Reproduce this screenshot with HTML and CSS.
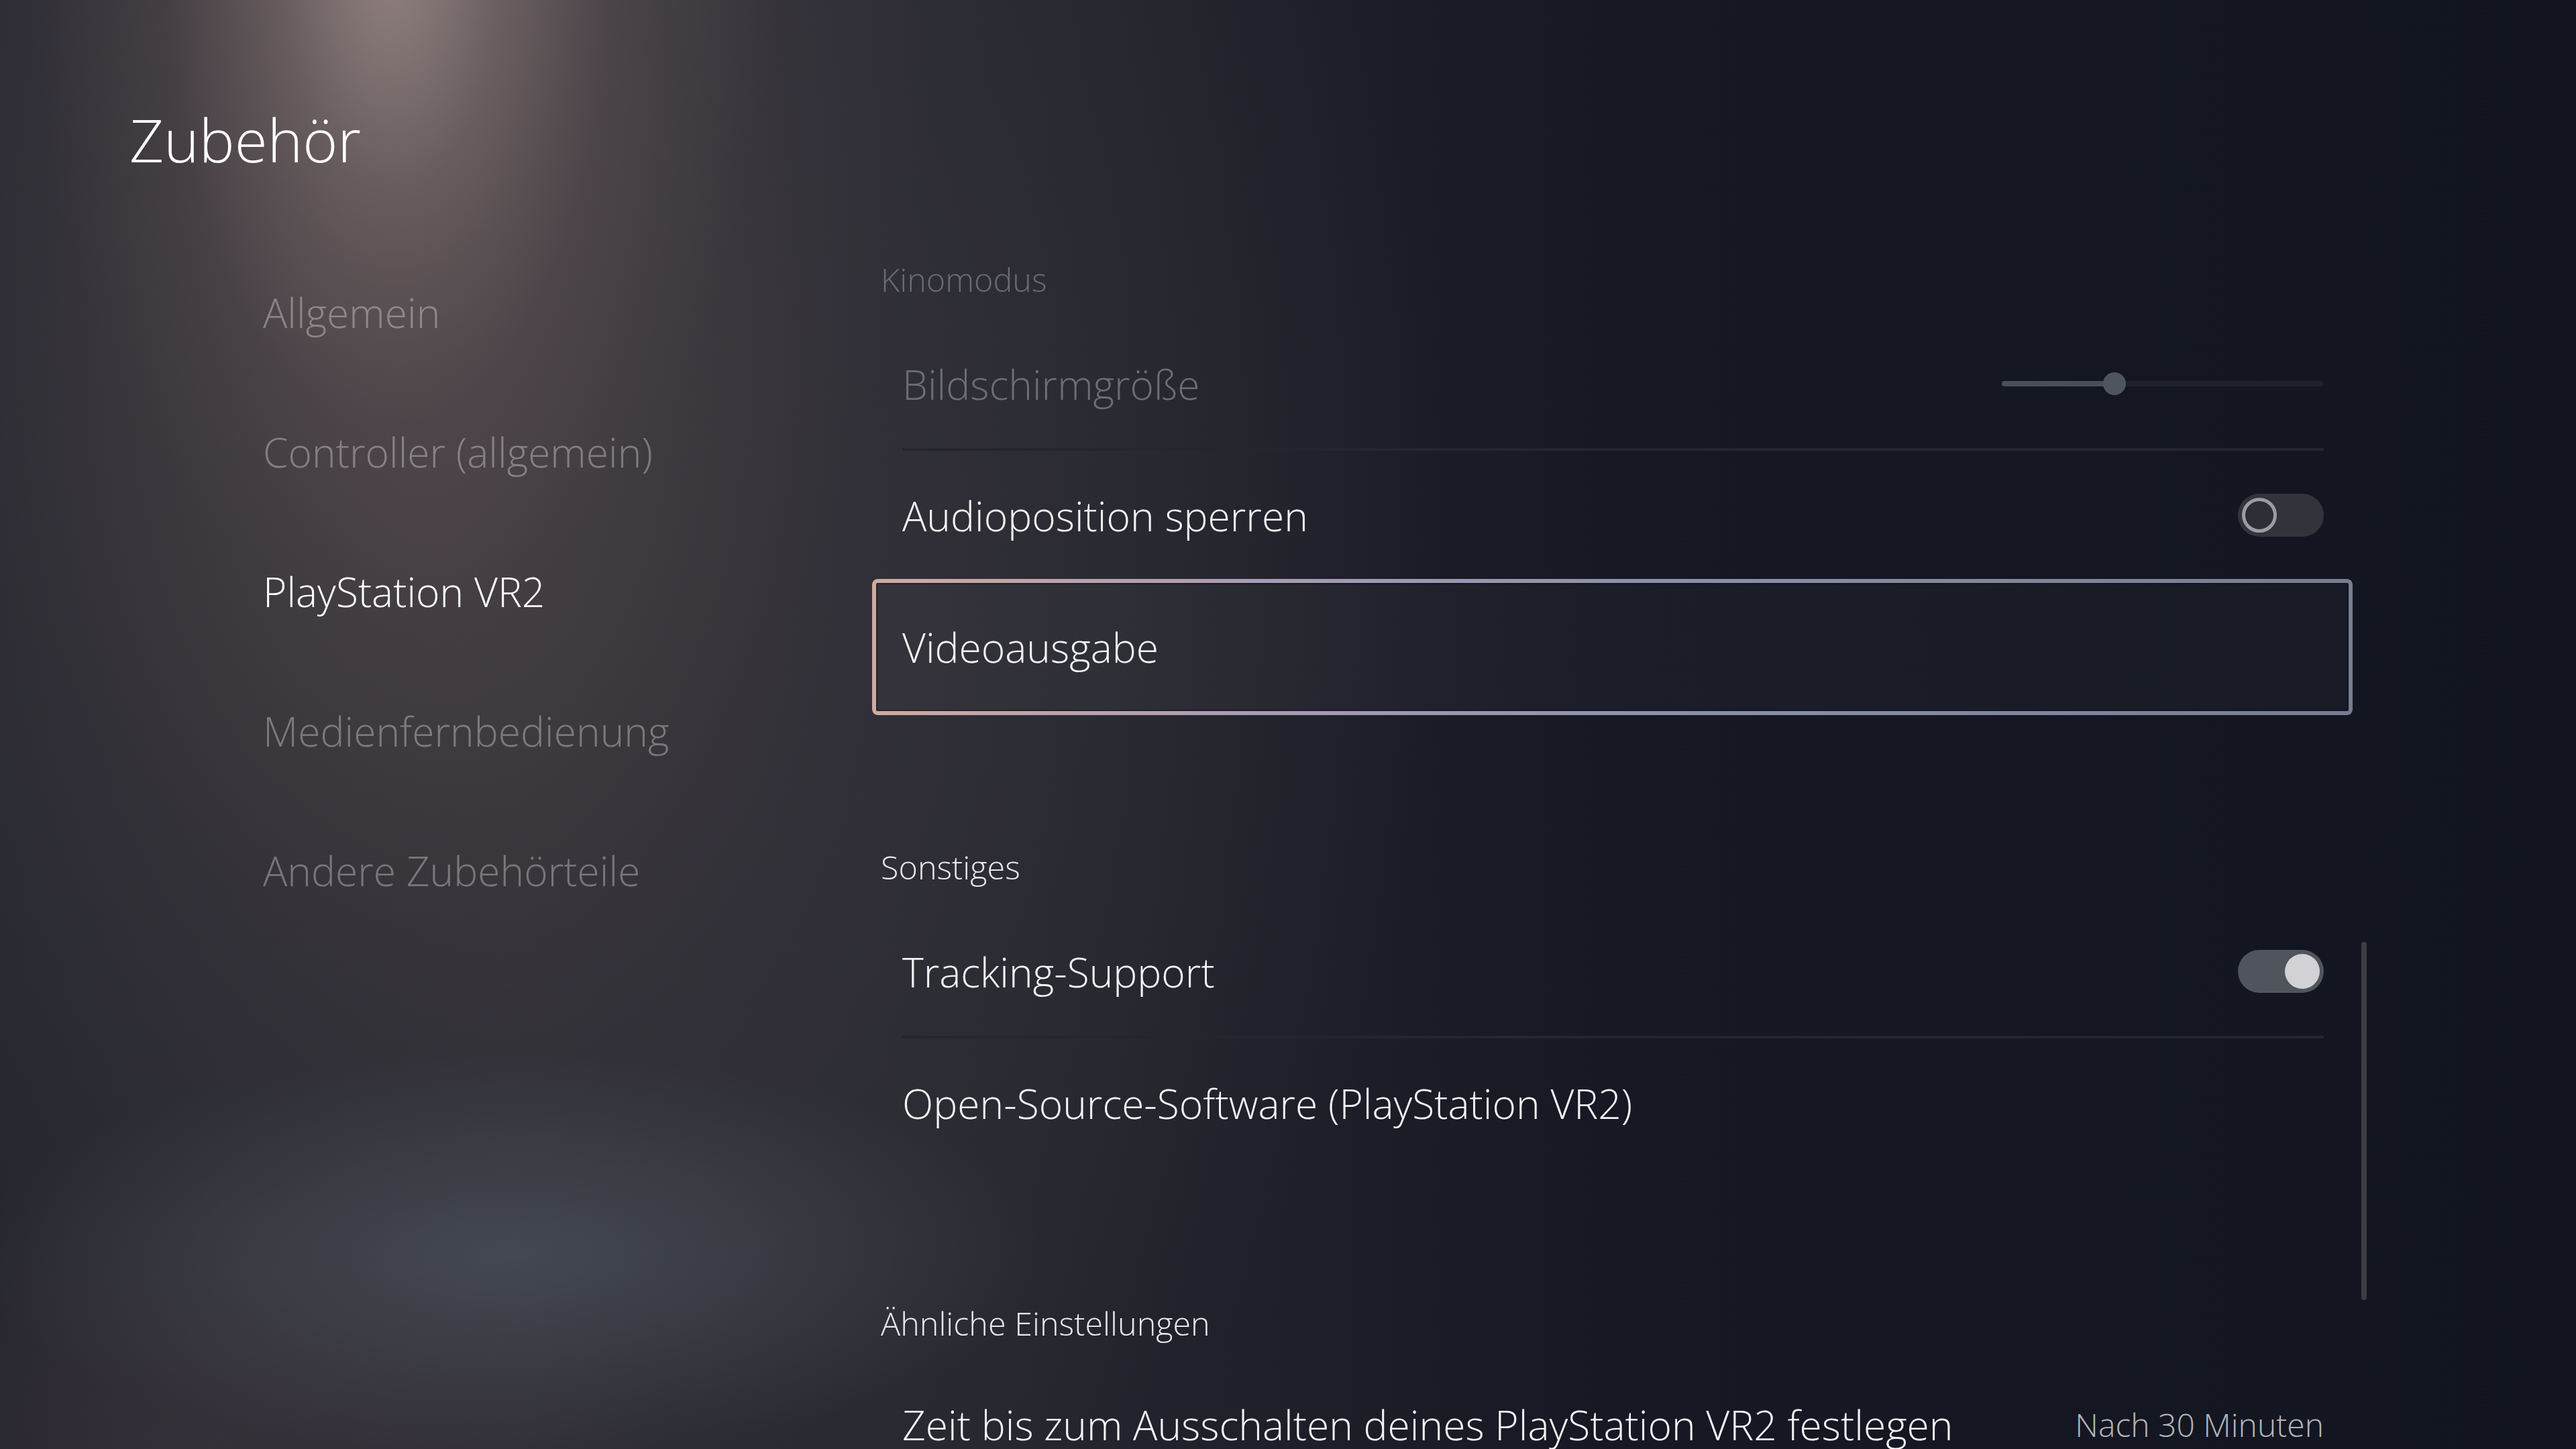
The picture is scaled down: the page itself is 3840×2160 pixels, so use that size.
FILE: index.html
```html
<!DOCTYPE html>
<html lang="de">
<head>
<meta charset="utf-8">
<title>Zubehör</title>
<link rel="stylesheet" href="styles.css">
</head>
<body>
<div class="screen">
  <aside class="sidebar">
    <h1 class="title">Zubehör</h1>
    <nav class="menu">
      <div class="menu-item">Allgemein</div>
      <div class="menu-item">Controller (allgemein)</div>
      <div class="menu-item active">PlayStation VR2</div>
      <div class="menu-item">Medienfernbedienung</div>
      <div class="menu-item">Andere Zubehörteile</div>
    </nav>
  </aside>
  <main class="panel">
    <section class="section">
      <div class="section-head dim">Kinomodus</div>
      <div class="row divided">
        <span class="label dim">Bildschirmgröße</span>
        <div class="slider"><div class="slider-fill" style="width:35%"></div><div class="slider-thumb" style="left:35%"></div></div>
      </div>
      <div class="row">
        <span class="label">Audioposition sperren</span>
        <div class="toggle off"><div class="knob"></div></div>
      </div>
      <div class="row focused">
        <span class="label">Videoausgabe</span>
      </div>
    </section>
    <section class="section">
      <div class="section-head">Sonstiges</div>
      <div class="row divided">
        <span class="label">Tracking-Support</span>
        <div class="toggle on"><div class="knob"></div></div>
      </div>
      <div class="row">
        <span class="label">Open-Source-Software (PlayStation VR2)</span>
      </div>
    </section>
    <section class="section">
      <div class="section-head">Ähnliche Einstellungen</div>
      <div class="row last">
        <span class="label">Zeit bis zum Ausschalten deines PlayStation VR2 festlegen</span>
        <span class="value">Nach 30 Minuten</span>
      </div>
    </section>
    <div class="scrollbar"></div>
  </main>
</div>
</body>
</html>
```
FILE: styles.css
```css
* { box-sizing: border-box; }
html, body {
  margin: 0;
  padding: 0;
  width: 3840px;
  height: 2160px;
  overflow: hidden;
}
body {
  font-family: "Open Sans", "Noto Sans", "Liberation Sans", sans-serif;
  font-weight: 300;
  color: #f2f2f4;
  background:
    radial-gradient(ellipse 330px 700px at 580px -60px, rgba(176,156,152,0.55) 0%, rgba(150,130,128,0.25) 50%, rgba(120,104,104,0) 100%),
    radial-gradient(ellipse 800px 1500px at 600px -120px, rgba(150,132,130,0.6) 0%, rgba(118,102,102,0.4) 35%, rgba(90,80,84,0.15) 70%, rgba(80,72,76,0) 100%),
    radial-gradient(ellipse 800px 300px at 760px 1870px, rgba(84,92,104,0.55) 0%, rgba(84,92,104,0) 100%),
    radial-gradient(ellipse 700px 400px at 300px 2160px, rgba(80,64,72,0.35) 0%, rgba(80,64,72,0) 100%),
    radial-gradient(ellipse 1500px 1900px at 650px 800px, rgba(68,62,66,0.9) 0%, rgba(56,54,60,0.6) 45%, rgba(40,40,48,0) 100%),
    linear-gradient(90deg, #1c1e27 0%, #2a2a32 20%, #24252e 40%, #161823 62%, #121520 100%);
}
.screen {
  display: flex;
  width: 3840px;
  height: 2160px;
}
.sidebar {
  width: 1300px;
  flex: none;
  padding-top: 154px;
}
.title {
  margin: 0 0 99px 193px;
  font-size: 89px;
  font-weight: 300;
  line-height: 108px;
  height: 108px;
  color: #ffffff;
}
.menu {
  display: flex;
  flex-direction: column;
  padding-left: 392px;
}
.menu-item {
  height: 208px;
  display: flex;
  align-items: center;
  font-size: 60.5px;
  color: rgba(255,255,255,0.33);
}
.menu-item.active {
  color: #ffffff;
}
.panel {
  position: relative;
  width: 2207px;
  flex: none;
  padding-top: 366px;
  display: flex;
  flex-direction: column;
  gap: 180px;
}
.section {
  display: flex;
  flex-direction: column;
}
.section-head {
  height: 100px;
  line-height: 100px;
  margin-bottom: 8px;
  padding-left: 13px;
  font-size: 48.5px;
  color: #e8e8ec;
}
.section-head.dim { color: #6a6c74; }
.row {
  position: relative;
  height: 196px;
  display: flex;
  align-items: center;
  justify-content: space-between;
  padding: 0 43px 0 45px;
  font-size: 60.5px;
}
.row.last { margin-top: -5px; }
.row.divided::after {
  content: "";
  position: absolute;
  left: 45px;
  right: 43px;
  bottom: -2px;
  height: 4px;
  background: #24262f;
}
.label { color: #f4f4f6; white-space: nowrap; }
.label.dim { color: #6c6e76; }
.value {
  font-size: 48px;
  color: #b4b5bc;
}
.slider {
  position: relative;
  width: 480px;
  height: 8px;
  border-radius: 4px;
  background: #1e2129;
}
.slider-fill {
  height: 8px;
  border-radius: 4px;
  background: #4a4f56;
}
.slider-thumb {
  position: absolute;
  top: -13px;
  width: 34px;
  height: 34px;
  margin-left: -17px;
  border-radius: 50%;
  background: #4f555d;
}
.toggle {
  width: 128px;
  height: 64px;
  border-radius: 32px;
  display: flex;
  align-items: center;
  padding: 0 6px;
}
.toggle.off { background: #33333b; justify-content: flex-start; }
.toggle.on { background: #50555d; justify-content: flex-end; }
.toggle .knob {
  width: 52px;
  height: 52px;
  border-radius: 50%;
}
.toggle.off .knob {
  border: 5px solid #9c9ca4;
  background: #2e2e36;
}
.toggle.on .knob { background: #d2d2d6; }
.row.focused {
  margin: -3px 0 -4px 0;
  height: 203px;
  border-radius: 8px;
  background: rgba(255,255,255,0.025);
  box-shadow: inset 0 0 0 8px rgba(10,10,16,0.35);
}
.row.focused::before {
  content: "";
  position: absolute;
  inset: 0;
  border-radius: 8px;
  padding: 6px;
  background: linear-gradient(90deg, #cfaaa2 0%, #a99cb4 25%, #8a90a8 55%, #767d90 100%);
  -webkit-mask: linear-gradient(#000 0 0) content-box, linear-gradient(#000 0 0);
  -webkit-mask-composite: xor;
  mask-composite: exclude;
}
.scrollbar {
  position: absolute;
  left: 2220px;
  top: 1404px;
  width: 8px;
  height: 534px;
  border-radius: 4px;
  background: #3b3d45;
}
```
